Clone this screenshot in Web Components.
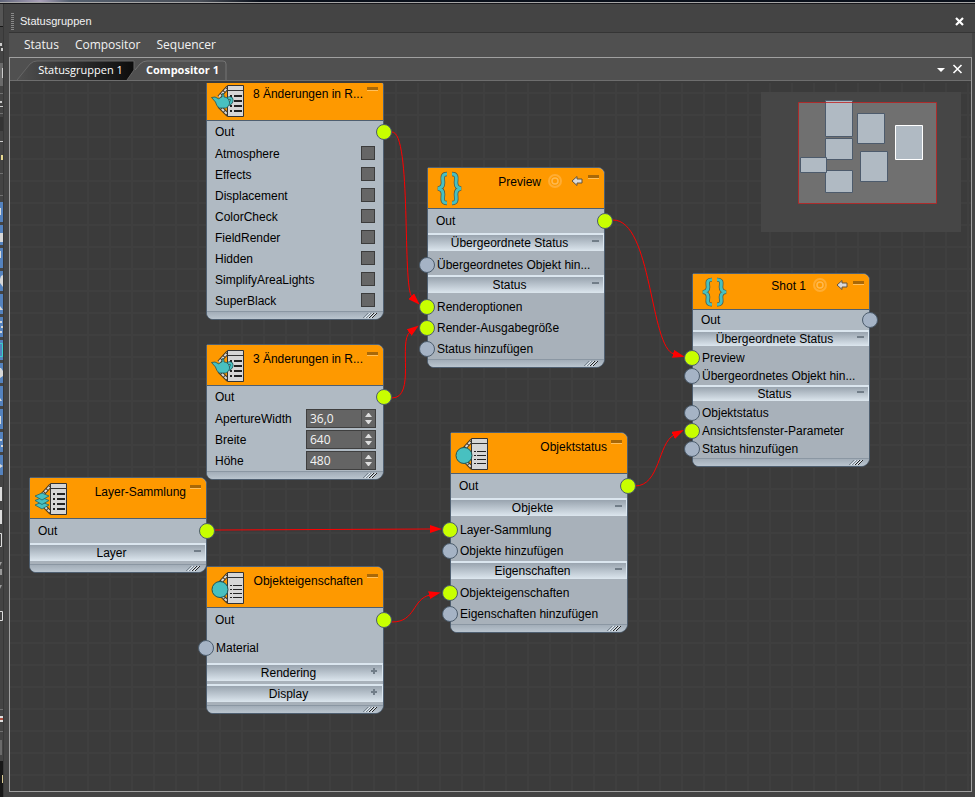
<!doctype html>
<html lang="de">
  <head>
    <meta charset="utf-8" />
    <title>Statusgruppen</title>
    <style>
      html,
      body {
        height: 100%;
        margin: 0;
      }

      body {
        font: 12px/16px 'Liberation Sans', sans-serif;
        background: #444;
        overflow: hidden;
      }
    </style>
  </head>

  <body>
    <dock-window></dock-window>

    <script>
      function define(name, html, setup) {
        const template = document.createElement('template')
        template.innerHTML = html

        customElements.define(
          name,
          class extends HTMLElement {
            connectedCallback() {
              if (this.shadowRoot) return
              this.attachShadow({ mode: 'open' }).appendChild(
                template.content.cloneNode(true),
              )
              if (setup) setup(this, this.shadowRoot)
            }
          },
        )
      }

      const paper = (lines) => `
        <g fill="none">
          <path d="M8 14 17 4M8 23 17 32" stroke="#4a3a20" stroke-width="4"/>
          <path d="M8 14 17 4M8 23 17 32" stroke="#d8d8d8" stroke-width="2" stroke-dasharray="3 1"/>
        </g>
        <path d="M16.500 2.500h16v31h-16z" fill="#d6d6d6" stroke="#333"/>
        <path d="M17 7.500h15" stroke="#333"/>
        ${lines}`
      const thick = paper(
        '<path d="M19 13h2M19 18h2M19 23h2M19 28h2M23 13h8M23 18h8M23 23h8M23 28h8" stroke="#222" stroke-width="2"/>',
      )
      const thin = paper(
        '<path d="M19 15.500h2M19 19.500h2M19 23.500h2M19 27.500h2M22 15.500h9M22 19.500h9M22 23.500h9M22 27.500h9" stroke="#222"/>',
      )
      const brace =
        'M14 3C8 3 10 8 10 12 10 15 9 17 5 17.500 9 18 10 20 10 23 10 27 8 32 14 32M19 3C25 3 23 8 23 12 23 15 24 17 28 17.500 24 18 23 20 23 23 23 27 25 32 19 32'

      const icons = {
        teapot: `${thick}
          <g fill="none" stroke="#1f5557">
            <path d="M17 15.500c5-2 5 4 0 6" stroke-width="3.500"/>
            <path d="M17 15.500c5-2 5 4 0 6" stroke="#48c0c0" stroke-width="2"/>
          </g>
          <path d="M.500 14.500 4 14l4 2c1-1 2-2 3-2v-2l1-2 1 2v2c3 0 5 2 5.500 5s-2.500 6-4 6h-6c-2-1-3-3-4-6z" fill="#48c0c0" stroke="#1f5557" stroke-width=".8"/>`,
        sphere: `${thin}<circle cx="9" cy="19.500" r="8" fill="#48c0c0" stroke="#1f5557"/>`,
        layers: `${thick}
          <g fill="#48c0c0" stroke="#1f6668" stroke-width=".8"><path d="M1 24l7-3 7 3-7 4z"/><path d="M1 19.500l7-3 7 3-7 4z"/><path d="M1 15l7-3 7 3-7 4z"/></g>`,
        braces: `<path d="${brace}" fill="none" stroke="#4b5a4a" stroke-width="4.500"/>
          <path d="${brace}" fill="none" stroke="#48c0c0" stroke-width="3"/>`,
      }

      define(
        'node-box',
        `
        <style>
          :host {
            display: block;
            box-sizing: border-box;
            width: 178px;
            border: 1px solid #4f5f70;
            border-radius: 2px 7px 9px 7px;
            background: #b0bac3;
            color: #000;
          }
          header {
            display: flex;
            align-items: flex-start;
            box-sizing: border-box;
            height: var(--head, 41px);
            padding: 0 5px 0 4px;
            border-bottom: 1px solid #4f5f70;
            border-radius: 1px 6px 0 0;
            background: #fe9900;
          }
          header > svg {
            flex: none;
            width: 34px;
            height: calc(var(--head, 41px) - 5px);
            margin-top: 3px;
          }
          :host([icon='braces']) header > svg {
            margin-left: 1px;
          }
          h2 {
            flex: 1;
            margin: var(--title-top, 6px) 4px 0 0;
            font: inherit;
            text-align: right;
            white-space: nowrap;
          }
          .tools {
            display: none;
            gap: 9px;
            margin: var(--title-top, 6px) 5px 0 0;
          }
          :host([icon='braces']) .tools {
            display: flex;
          }
          :host([icon='braces']) h2 {
            margin-right: 7px;
          }
          button {
            display: block;
            padding: 0;
            border: 0;
            background: none;
          }
          .tools svg {
            display: block;
          }
          .min {
            flex: none;
            width: 11px;
            height: 4px;
            margin-top: 7px;
            border-bottom: 1px solid #ffc05c;
            background: #a86808;
          }
          footer {
            display: flex;
            justify-content: flex-end;
            box-sizing: border-box;
            height: 8px;
            padding-right: 3px;
            border-top: 1px solid #8b97a3;
            border-radius: 0 0 8px 6px;
            background: linear-gradient(#a2adb8, #bac5cf);
          }
        </style>
        <header>
          <svg viewBox="0 0 34 36" preserveAspectRatio="none"></svg>
          <h2></h2>
          <div class="tools">
            <button aria-label="Anzeigen">
              <svg width="14" height="14" viewBox="0 0 14 14" fill="none" stroke="#ffad33"><circle cx="7" cy="7" r="6" stroke-width="2"/><circle cx="7" cy="7" r="3" stroke="#ffb94f" stroke-width="1.500"/></svg>
            </button>
            <button aria-label="Zurück">
              <svg width="12" height="14" viewBox="0 0 12 14"><path d="M1 7l5-4.500V5h5v4H6v2.500z" fill="#d9d9d9" stroke="#66543a"/></svg>
            </button>
          </div>
          <button class="min" aria-label="Minimieren"></button>
        </header>
        <slot></slot>
        <footer>
          <svg width="18" height="6" viewBox="0 0 18 6"><path d="M1 6l5-5M4 6l5-5" stroke="#7b8792"/><path d="M7 6l5-5M10 6l5-5" stroke="#222"/><path d="M3 6l5-5M6 6l5-5M9 6l5-5" stroke="#e4ecf2"/></svg>
        </footer>
        `,
        (host, root) => {
          root.querySelector('header > svg').innerHTML =
            icons[host.getAttribute('icon')]
          root.querySelector('h2').textContent = host.getAttribute('name')
        },
      )

      define(
        'node-row',
        `
        <style>
          :host {
            position: relative;
            display: flex;
            align-items: center;
            box-sizing: border-box;
            height: var(--row, 21px);
            padding-left: 8px;
            white-space: nowrap;
          }
          :host([port='in']) {
            padding-left: 9px;
          }
          i {
            position: absolute;
            display: none;
            box-sizing: border-box;
            width: 16px;
            height: 16px;
            border: 1px solid #4c5c6c;
            border-radius: 50%;
            background: #a5b3c5;
          }
          :host([port]) i {
            display: block;
          }
          :host([port='in']) i {
            left: -9px;
          }
          :host([port='out']) i {
            right: -9px;
          }
          :host([linked]) i {
            background: #c8ff00;
          }
        </style>
        <i></i><slot></slot>
        `,
      )

      define(
        'node-section',
        `
        <style>
          :host {
            display: block;
            background: #a8b1ba;
          }
          :host([collapsed]) {
            padding-bottom: 3px;
          }
          button {
            display: flex;
            align-items: center;
            box-sizing: border-box;
            width: 100%;
            height: var(--section, 18px);
            padding: 0 4px 0 0;
            border: solid #dbe6ef;
            border-width: 2px 1px 0 0;
            background: linear-gradient(#99a4af, #dce6ee);
            color: #000;
            font: 12px/14px 'Liberation Sans', sans-serif;
          }
          span {
            flex: 1;
            text-align: center;
            white-space: nowrap;
          }
          svg {
            flex: none;
            margin-bottom: 4px;
          }
          .rows {
            padding-top: 3px;
          }
          :host([collapsed]) .rows {
            display: none;
          }
        </style>
        <button>
          <span></span>
          <svg width="8" height="8" viewBox="0 0 8 8" fill="none" stroke="#717d88" stroke-width="2"><path/></svg>
        </button>
        <div class="rows"><slot></slot></div>
        `,
        (host, root) => {
          root.querySelector('span').textContent = host.getAttribute('name')
          root
            .querySelector('path')
            .setAttribute(
              'd',
              host.getAttribute('sign') === 'plus' ? 'M1 4h6M4 1v6' : 'M1 4h7',
            )
        },
      )

      define(
        'check-row',
        `
        <style>
          :host {
            display: block;
          }
          label {
            display: flex;
            align-items: center;
            justify-content: space-between;
            height: 21px;
            padding: 0 8px;
          }
          input {
            appearance: none;
            box-sizing: border-box;
            width: 14px;
            height: 14px;
            margin: 0 0 1px;
            border: 1px solid #3c3c3c;
            background: #666;
          }
        </style>
        <label><slot></slot><input type="checkbox" /></label>
        `,
        (host, root) => {
          root.querySelector('input').setAttribute('aria-label', host.textContent)
        },
      )

      define(
        'number-row',
        `
        <style>
          :host {
            display: block;
          }
          label {
            display: flex;
            align-items: center;
            justify-content: space-between;
            height: 21px;
            padding: 0 7px 0 8px;
          }
          div {
            display: flex;
            box-sizing: border-box;
            width: 70px;
            height: 19px;
            border: 1px solid #3f3f3f;
            background: #646464;
          }
          input {
            flex: 1;
            min-width: 0;
            padding: 0 0 0 3px;
            border: 0;
            border-right: 1px solid #4b4b4b;
            background: none;
            color: #f4f4f4;
            font: 12px/16px 'Open Sans', sans-serif;
          }
          svg {
            width: 13px;
            height: 17px;
          }
        </style>
        <label>
          <slot></slot>
          <div>
            <input type="text" />
            <svg viewBox="0 0 13 17" fill="#ddd"><path d="M3 7 6 3h1l3 4zM3 10l3 4h1l3-4z"/></svg>
          </div>
        </label>
        `,
        (host, root) => {
          root.querySelector('input').value = host.getAttribute('value')
        },
      )

      define(
        'mini-map',
        `
        <style>
          :host {
            display: block;
            width: 200px;
            height: 140px;
            background: #464646;
          }
          svg {
            display: block;
          }
        </style>
        <svg width="200" height="140" viewBox="0 0 200 140">
          <path d="M37.500 10.500h138v101h-138z" fill="#707070"/>
          <g fill="#b0bac3" stroke="#4d5b6c">
            <path d="M64.500 8.500h27v36h-27zM96.500 21.500h27v30h-27zM64.500 46.500h27v21h-27zM64.500 78.500h27v22h-27zM99.500 59.500h27v30h-27z"/>
            <path d="M39.500 65.500h26v15h-26z"/>
            <path d="M134.500 33.500h27v34h-27z" stroke="#fff"/>
          </g>
          <path d="M37.500 10.500h138v101h-138z" fill="none" stroke="#c02020" stroke-opacity=".8"/>
        </svg>
        `,
      )

      define(
        'tool-strip',
        `
        <style>
          :host {
            display: block;
            width: 4px;
            overflow: hidden;
            background: #444;
          }
          svg {
            display: block;
          }
        </style>
        <svg width="4" height="793" viewBox="0 4 4 793"></svg>
        `,
        (host, root) => {
          let s = '<path d="M0 4h3v22H0z" fill="#555"/><path d="M0 26h3v1H0zM0 761h3v36H0z" fill="#181818"/>'
          s += '<path d="M0 63h3v23H0zM0 740h2v15H0z" fill="#6a6a6a"/><path d="M0 93h3v1H0zM0 113h3v1H0zM0 173h3v1H0zM0 195h3v1H0zM0 709h3v1H0zM0 731h3v1H0z" fill="#707070"/>'
          s += '<path d="M2 68h1v10H2zM0 43h2v3H0zM1 48h2v3H1zM0 101h2v2H0zM0 106h3v1H0zM0 141h3v1H0z" fill="#ccc"/><path d="M1 155h2v5H1z" fill="#e8d990"/>'
          s += '<path d="M0 117h3v14H0z" fill="#343434"/>'
          for (let y = 202; y < 460; y += 23) {
            s += `<path d="M0 ${y}h3v20H0z" fill="#5482be"/>`
          }
          s += '<path d="M0 208h1v7H0zM0 233h3v9H0zM0 251h1v7H0zM1 276l2-1v12l-3-4v-4zM0 306l3 4H0zM0 321h2v2H0zM1 326h2v2H1zM0 331h2v2H0zM0 368h1l2 3v5l-3 2zM0 398l2 3H0zM0 416h1v8H0zM0 439h2v2H0zM1 445h2v2H1zM0 464l3 2-3 2z" fill="#d8d8d8"/>'
          s += '<path d="M0 343.500h2.500v13H0" fill="none" stroke="#37d0cc"/>'
          s += '<path d="M0 487h2v14H0zM0 510h2v14H0zM0 716h3v6H0z" fill="#ddd"/><path d="M0 533.500h1.500v13H0M0 611.500h2.500v9H0" fill="none" stroke="#ddd"/>'
          s += '<path d="M0 562h2l-2 4zM0 569h2v6H0zM0 585h2l-2 4z" fill="#999"/><path d="M0 718h3v2H0z" fill="#b05040"/><path d="M2 775h1v8H2z" fill="#d8c890"/>'
          root.querySelector('svg').innerHTML = s
        },
      )

      define(
        'node-canvas',
        `
        <style>
          :host {
            position: relative;
            display: block;
            overflow: hidden;
            border-top: 2px solid #3b3b3b;
            background:
              repeating-linear-gradient(90deg, transparent 0 11px, #3f3f3f 11px 13px, transparent 13px 22px),
              repeating-linear-gradient(transparent 0 9px, #3f3f3f 9px 11px, transparent 11px 22px),
              #3b3b3b;
          }
          .links {
            position: absolute;
            width: 100%;
            height: 100%;
          }
          node-box,
          mini-map {
            position: absolute;
          }
          mini-map {
            top: 9px;
            right: 10px;
          }
          .small {
            --head: 36px;
            --title-top: 4px;
            --row: 18px;
            --section: 16px;
          }
          .out {
            --row: 24px;
          }
          .small .out {
            --row: 20px;
          }
          .first {
            --row: 22px;
          }
          .tall {
            --row: 31px;
          }
        </style>
        <svg class="links" fill="none" stroke="#f00">
          <defs>
            <marker id="tip" orient="auto" markerUnits="userSpaceOnUse" markerWidth="12" markerHeight="8" refX="1" refY="4">
              <path d="M0 0 12 4 0 8z" fill="#f00" stroke="none"/>
            </marker>
          </defs>
          <g marker-end="url(#tip)">
            <path d="M382 49C402 49 392 204 402 214"/>
            <path d="M382 315C406 315 388 258 400 249"/>
            <path d="M603 137C642 137 640 265 664 271"/>
            <path d="M205 447 421 446"/>
            <path d="M382 539C406 539 402 516 420 512"/>
            <path d="M625 403C650 403 648 360 664 352"/>
          </g>
        </svg>
        <mini-map></mini-map>

        <node-box icon="teapot" name="8 Änderungen in R..." style="left: 196px; top: -4px">
          <node-row class="first" port="out" linked>Out</node-row>
          <check-row>Atmosphere</check-row>
          <check-row>Effects</check-row>
          <check-row>Displacement</check-row>
          <check-row>ColorCheck</check-row>
          <check-row>FieldRender</check-row>
          <check-row>Hidden</check-row>
          <check-row>SimplifyAreaLights</check-row>
          <check-row>SuperBlack</check-row>
        </node-box>

        <node-box icon="teapot" name="3 Änderungen in R..." style="left: 196px; top: 261px">
          <node-row class="first" port="out" linked>Out</node-row>
          <number-row value="36,0">ApertureWidth</number-row>
          <number-row value="640">Breite</number-row>
          <number-row value="480">Höhe</number-row>
        </node-box>

        <node-box icon="sphere" name="Objekteigenschaften" style="left: 196px; top: 483px">
          <node-row class="out" port="out" linked>Out</node-row>
          <node-row class="tall" port="in">Material</node-row>
          <node-section name="Rendering" sign="plus" collapsed></node-section>
          <node-section name="Display" sign="plus" collapsed></node-section>
        </node-box>

        <node-box icon="layers" name="Layer-Sammlung" style="left: 19px; top: 394px">
          <node-row class="out" port="out" linked>Out</node-row>
          <node-section name="Layer" collapsed></node-section>
        </node-box>

        <node-box icon="braces" name="Preview" style="left: 417px; top: 84px">
          <node-row class="out" port="out" linked>Out</node-row>
          <node-section name="Übergeordnete Status">
            <node-row port="in">Übergeordnetes Objekt hin...</node-row>
          </node-section>
          <node-section name="Status">
            <node-row port="in" linked>Renderoptionen</node-row>
            <node-row port="in" linked>Render-Ausgabegröße</node-row>
            <node-row port="in">Status hinzufügen</node-row>
          </node-section>
        </node-box>

        <node-box icon="sphere" name="Objektstatus" style="left: 440px; top: 349px">
          <node-row class="out" port="out" linked>Out</node-row>
          <node-section name="Objekte">
            <node-row port="in" linked>Layer-Sammlung</node-row>
            <node-row port="in">Objekte hinzufügen</node-row>
          </node-section>
          <node-section name="Eigenschaften">
            <node-row port="in" linked>Objekteigenschaften</node-row>
            <node-row port="in">Eigenschaften hinzufügen</node-row>
          </node-section>
        </node-box>

        <node-box class="small" icon="braces" name="Shot 1" style="left: 682px; top: 190px">
          <node-row class="out" port="out">Out</node-row>
          <node-section name="Übergeordnete Status">
            <node-row port="in" linked>Preview</node-row>
            <node-row port="in">Übergeordnetes Objekt hin...</node-row>
          </node-section>
          <node-section name="Status">
            <node-row port="in">Objektstatus</node-row>
            <node-row port="in" linked>Ansichtsfenster-Parameter</node-row>
            <node-row port="in">Status hinzufügen</node-row>
          </node-section>
        </node-box>
        `,
      )

      define(
        'tab-strip',
        `
        <style>
          :host {
            display: flex;
            align-items: flex-end;
            justify-content: space-between;
            box-sizing: border-box;
            height: 23px;
            padding: 0 8px 0 7px;
            border-bottom: 1px solid #6e6e6e;
            background: #505050;
            color: #fff;
          }
          .tabs,
          .tools {
            display: flex;
          }
          button {
            padding: 0;
            border: 0;
            background: none;
            color: inherit;
            font: 11px/20px 'Open Sans', sans-serif;
          }
          .tabs button {
            display: grid;
            height: 20px;
          }
          .tabs button > * {
            grid-area: 1 / 1;
          }
          .tabs svg {
            width: 100%;
            height: 20px;
          }
          .tabs span {
            padding: 0 11px 0 20px;
          }
          .tabs .active {
            margin-bottom: -1px;
            font-weight: bold;
          }
          .tabs .active span {
            padding: 0 8px 0 11px;
          }
          .tools {
            gap: 6px;
            align-self: center;
          }
          .tools svg {
            display: block;
          }
        </style>
        <div class="tabs" role="tablist">
          <button role="tab" aria-selected="false">
            <svg viewBox="0 0 118 20" preserveAspectRatio="none">
              <defs><linearGradient id="g"><stop stop-color="#505050"/><stop offset="1" stop-color="#0c0c0c"/></linearGradient></defs>
              <path d="M0 20 13 4q3-3 7-3h97v9l-7 10" fill="url(#g)" stroke="#666"/>
            </svg>
            <span>Statusgruppen 1</span>
          </button>
          <button class="active" role="tab" aria-selected="true">
            <svg viewBox="0 0 92 20" preserveAspectRatio="none">
              <path d="M0 10 5 4q3-3 7-3h76q3 0 3 3v16H0z" fill="#505050"/>
              <path d="M0 10 5 4q3-3 7-3h76q3 0 3 3v16" fill="none" stroke="#747474"/>
            </svg>
            <span>Compositor 1</span>
          </button>
        </div>
        <div class="tools">
          <button aria-label="Tabs"><svg width="10" height="10" viewBox="0 0 10 10"><path d="M1 4h8L5 8z" fill="#fff"/></svg></button>
          <button aria-label="Tab schließen"><svg width="11" height="10" viewBox="0 0 11 10"><path d="M1.500 1 9.500 9M9.500 1 1.500 9" stroke="#fff" stroke-width="1.600"/></svg></button>
        </div>
        `,
      )

      define(
        'dock-window',
        `
        <style>
          :host {
            display: grid;
            grid-template: 4px 1fr / 4px 1fr;
            height: 100vh;
            color: #f2f2f2;
          }
          .edge {
            grid-column: 1 / -1;
            box-sizing: border-box;
            border-bottom: 1px solid #17171b;
            background:
              linear-gradient(transparent 2px, #a6a6a6 2px),
              linear-gradient(90deg, #60657a, #a9a0b8 40px, #55606f 70px, #4a4f58 200px, #0b111c 260px);
          }
          main {
            display: flex;
            flex-direction: column;
            min-height: 0;
            margin-left: -1px;
            padding: 0 3px 5px 5px;
            border-left: 1px solid #383838;
          }
          .title {
            display: flex;
            align-items: center;
            gap: 6px;
            height: 22px;
            margin-right: -3px;
            padding: 6px 11px 0 2px;
            border-bottom: 1px solid #353535;
          }
          .grip {
            width: 3px;
            height: 17px;
            background: repeating-linear-gradient(#999 0 1px, transparent 1px 2px);
            opacity: .8;
          }
          h1 {
            flex: 1;
            margin: 0;
            font: 11px/16px 'Liberation Sans', sans-serif;
          }
          button {
            padding: 0;
            border: 0;
            background: none;
            color: inherit;
            font: 12px/16px 'Open Sans', sans-serif;
          }
          .title svg {
            display: block;
          }
          nav {
            display: flex;
            gap: 16px;
            height: 24px;
            padding: 0 15px;
            background: #505050;
          }
          .frame {
            flex: 1;
            display: flex;
            flex-direction: column;
            min-height: 0;
            border: 1px solid #a0a0a0;
          }
          node-canvas {
            flex: 1;
          }
        </style>
        <div class="edge"></div>
        <tool-strip></tool-strip>
        <main>
          <div class="title">
            <span class="grip"></span>
            <h1>Statusgruppen</h1>
            <button aria-label="Schließen"><svg width="9" height="9" viewBox="0 0 9 9"><path d="M1 1l7 7M8 1 1 8" stroke="#fff" stroke-width="2.200"/></svg></button>
          </div>
          <nav>
            <button>Status</button>
            <button>Compositor</button>
            <button>Sequencer</button>
          </nav>
          <div class="frame">
            <tab-strip></tab-strip>
            <node-canvas></node-canvas>
          </div>
        </main>
        `,
      )
    </script>
  </body>
</html>
